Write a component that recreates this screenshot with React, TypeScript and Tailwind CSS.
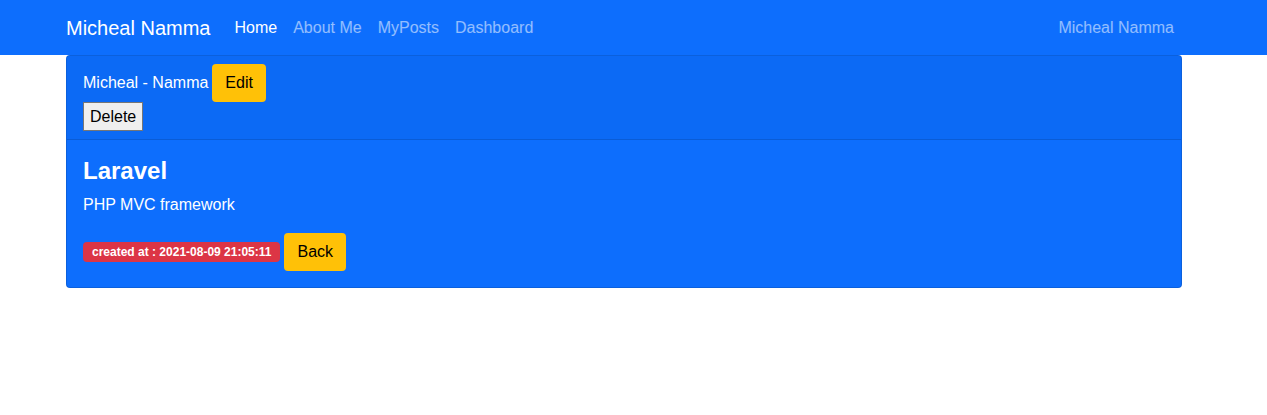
export default function App() {
  const font = { fontFamily: '"Liberation Sans", Arial, sans-serif' };
  return (
    <div className="min-h-[415px] bg-white text-[16px] leading-6 text-[#212529]" style={font}>
      {/* Navbar */}
      <nav className="h-[55px] bg-[#0d6efd]">
        <div className="ml-[54px] flex h-full w-[1140px] items-center px-3">
          <a className="mr-4 py-[5px] text-[20px] leading-[30px] text-white">Micheal Namma</a>
          <ul className="flex">
            <li className="px-2 text-white">Home</li>
            <li className="px-2 text-white/55">About Me</li>
            <li className="px-2 text-white/55">MyPosts</li>
            <li className="px-2 text-white/55">Dashboard</li>
          </ul>
          <span className="ml-auto px-2 text-white/55">Micheal Namma</span>
        </div>
      </nav>

      {/* Post card */}
      <div className="ml-[54px] w-[1140px] px-3">
        <div className="overflow-hidden rounded border border-black/[0.125] bg-[#0d6efd] text-white">
          <div className="border-b border-black/[0.125] bg-black/[0.03] px-4 py-2">
            <div className="flex items-center">
              <span>Micheal - Namma</span>
              <a className="ml-1 rounded border border-transparent bg-[#ffc107] px-3 py-1.5 text-black">Edit</a>
            </div>
            <button className="h-[29px] border border-[#767676] bg-[#efefef] px-1.5 leading-6 text-black">
              Delete
            </button>
          </div>
          <div className="p-4">
            <h4 className="mb-2 text-[24px] font-bold leading-[29px]">Laravel</h4>
            <p className="mb-4">PHP MVC framework</p>
            <div className="flex items-center">
              <span className="rounded bg-[#dc3545] px-[9px] py-[4px] text-[12px] font-bold leading-3 text-white">
                created at : 2021-08-09 21:05:11
              </span>
              <a className="ml-1 rounded border border-transparent bg-[#ffc107] px-3 py-1.5 text-black">Back</a>
            </div>
          </div>
        </div>
      </div>
    </div>
  );
}
